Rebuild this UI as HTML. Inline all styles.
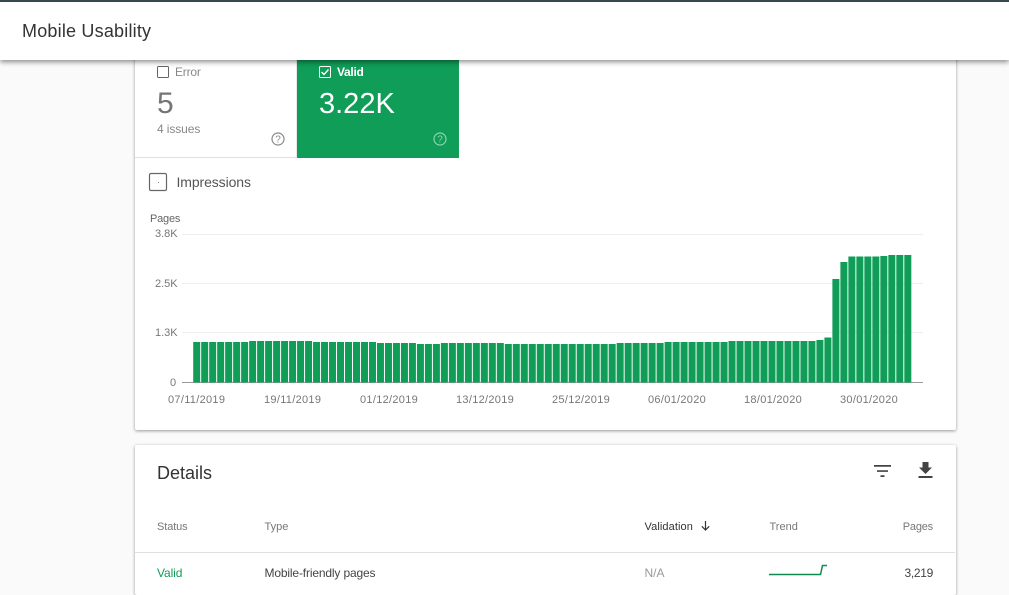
<!DOCTYPE html>
<html>
<head>
<meta charset="utf-8">
<style>
html,body{margin:0;padding:0;width:1009px;height:595px;overflow:hidden;background:#fafafa;font-family:"Liberation Sans",sans-serif;}
#page{position:relative;width:1009px;height:595px;overflow:hidden;background:#fafafa;}
.t{position:absolute;white-space:nowrap;line-height:1;}
.d{top:395px;font-size:11px;color:#777;letter-spacing:.3px;}
.y{font-size:11px;color:#777;}
#hdr{position:absolute;left:0;top:0;width:1009px;height:58px;background:#fff;border-top:2px solid #37474f;box-shadow:0 2px 5px rgba(0,0,0,.45);z-index:5;}
.card{position:absolute;left:135px;width:821px;background:#fff;box-shadow:0 1px 3px rgba(0,0,0,.4);border-radius:2px;}
svg{position:absolute;left:0;top:0;}
</style>
</head>
<body>
<div id="page">
<div class="card" style="top:40px;height:390px;"></div>
<div class="card" style="top:445px;height:150px;"></div>
<div style="position:absolute;left:135px;top:157px;width:162px;height:1px;background:#e0e0e0;"></div>
<div style="position:absolute;left:296px;top:60px;width:1px;height:98px;background:#e8e8e8;"></div>
<div style="position:absolute;left:297px;top:60px;width:162px;height:98px;background:#0f9d58;"></div>
<div id="hdr"></div>
<div class="t" style="left:22px;top:22px;font-size:18px;color:#333;letter-spacing:.2px;z-index:6;">Mobile Usability</div>

<div class="t" style="left:175px;top:66px;font-size:12px;color:#888;letter-spacing:-.2px;">Error</div>
<div class="t" style="left:157px;top:89px;font-size:30px;color:#757575;">5</div>
<div class="t" style="left:157px;top:123px;font-size:12px;color:#888;letter-spacing:-.1px;">4 issues</div>
<div class="t" style="left:337px;top:66px;font-size:12px;font-weight:bold;color:#fff;letter-spacing:-.3px;">Valid</div>
<div class="t" style="left:319px;top:90px;font-size:29px;color:#fff;">3.22K</div>
<div class="t" style="left:176.500px;top:175px;font-size:14px;color:#555;letter-spacing:-.1px;">Impressions</div>
<div class="t" style="left:150px;top:214px;font-size:11px;color:#666;letter-spacing:-.2px;">Pages</div>
<div class="t y" style="left:155px;top:229px;">3.8K</div>
<div class="t y" style="left:155px;top:279px;">2.5K</div>
<div class="t y" style="left:155px;top:328px;">1.3K</div>
<div class="t y" style="left:170px;top:378px;">0</div>
<div class="t d" style="left:168px;">07/11/2019</div>
<div class="t d" style="left:264px;">19/11/2019</div>
<div class="t d" style="left:360px;">01/12/2019</div>
<div class="t d" style="left:456px;">13/12/2019</div>
<div class="t d" style="left:552px;">25/12/2019</div>
<div class="t d" style="left:648px;">06/01/2020</div>
<div class="t d" style="left:744px;">18/01/2020</div>
<div class="t d" style="left:840px;">30/01/2020</div>

<div class="t" style="left:157px;top:464px;font-size:18px;color:#333;">Details</div>
<div class="t" style="left:157px;top:522px;font-size:11px;color:#777;letter-spacing:-.1px;">Status</div>
<div class="t" style="left:264.500px;top:522px;font-size:11px;color:#777;">Type</div>
<div class="t" style="left:644.500px;top:522px;font-size:11px;color:#333;letter-spacing:.1px;">Validation</div>
<div class="t" style="left:769.500px;top:522px;font-size:11px;color:#777;">Trend</div>
<div class="t" style="right:76px;top:522px;font-size:11px;color:#777;letter-spacing:-.2px;">Pages</div>
<div class="t" style="left:157px;top:567px;font-size:12px;color:#0f9d58;letter-spacing:-.1px;">Valid</div>
<div class="t" style="left:264.500px;top:567px;font-size:12px;color:#444;letter-spacing:-.15px;">Mobile-friendly pages</div>
<div class="t" style="left:644.500px;top:567px;font-size:12px;color:#999;">N/A</div>
<div class="t" style="right:76px;top:567px;font-size:12px;color:#444;letter-spacing:-.3px;">3,219</div>

<svg width="1009" height="595" viewBox="0 0 1009 595" style="z-index:2;">
  <!-- checkboxes -->
  <rect x="157.500" y="66.500" width="11" height="11" rx="1" fill="none" stroke="#666" stroke-width="1"/>
  <rect x="319.500" y="66.500" width="11" height="11" rx="1" fill="none" stroke="#fff" stroke-width="1"/>
  <path d="M321.500 72l2.500 2.500 4.500-5" fill="none" stroke="#fff" stroke-width="1.400"/>
  <rect x="149.500" y="173.500" width="17" height="17" rx="1.500" fill="none" stroke="#666" stroke-width="1.200"/>
  <rect x="158" y="182" width="1" height="1" fill="#888"/>
  <!-- help icons -->
  <circle cx="278" cy="139" r="6" fill="none" stroke="#888" stroke-width="1.200"/>
  <text x="278" y="142.500" font-size="10" text-anchor="middle" fill="#888" font-family="Liberation Sans">?</text>
  <circle cx="440" cy="139" r="6" fill="none" stroke="#8fd3b0" stroke-width="1.200"/>
  <text x="440" y="142.500" font-size="10" text-anchor="middle" fill="#8fd3b0" font-family="Liberation Sans">?</text>
  <!-- grid -->
  <path d="M182 234.500H923M182 283.500H923M182 332.500H923" stroke="#eeeeee" stroke-width="1" fill="none"/>
  <path d="M182 382.500H923" stroke="#999" stroke-width="1" fill="none"/>
  <!-- bars -->
  <path fill="#0f9d58" d="M193.200 382.500V342h7V382.500z
  m7.990 0V342h7V382.500z m7.990 0V342h7V382.500z m7.990 0V342h7V382.500z m7.990 0V342h7V382.500z m7.990 0V342h7V382.500z m7.990 0V342h7V382.500z
  m7.990 0V341h7V382.500z m7.990 0V341h7V382.500z m7.990 0V341h7V382.500z m7.990 0V341h7V382.500z m7.990 0V341h7V382.500z m7.990 0V341h7V382.500z m7.990 0V341h7V382.500z m7.990 0V341h7V382.500z
  m7.990 0V342h7V382.500z m7.990 0V342h7V382.500z m7.990 0V342h7V382.500z m7.990 0V342h7V382.500z m7.990 0V342h7V382.500z m7.990 0V342h7V382.500z m7.990 0V342h7V382.500z m7.990 0V342h7V382.500z
  m7.990 0V343h7V382.500z m7.990 0V343h7V382.500z m7.990 0V343h7V382.500z m7.990 0V343h7V382.500z m7.990 0V343h7V382.500z
  m7.990 0V344h7V382.500z m7.990 0V344h7V382.500z m7.990 0V344h7V382.500z
  m7.990 0V343h7V382.500z m7.990 0V343h7V382.500z m7.990 0V343h7V382.500z m7.990 0V343h7V382.500z m7.990 0V343h7V382.500z m7.990 0V343h7V382.500z m7.990 0V343h7V382.500z m7.990 0V343h7V382.500z
  m7.990 0V344h7V382.500z m7.990 0V344h7V382.500z m7.990 0V344h7V382.500z m7.990 0V344h7V382.500z m7.990 0V344h7V382.500z m7.990 0V344h7V382.500z m7.990 0V344h7V382.500z m7.990 0V344h7V382.500z m7.990 0V344h7V382.500z m7.990 0V344h7V382.500z m7.990 0V344h7V382.500z m7.990 0V344h7V382.500z m7.990 0V344h7V382.500z m7.990 0V344h7V382.500z
  m7.990 0V343h7V382.500z m7.990 0V343h7V382.500z m7.990 0V343h7V382.500z m7.990 0V343h7V382.500z m7.990 0V343h7V382.500z m7.990 0V343h7V382.500z
  m7.990 0V342h7V382.500z m7.990 0V342h7V382.500z m7.990 0V342h7V382.500z m7.990 0V342h7V382.500z m7.990 0V342h7V382.500z m7.990 0V342h7V382.500z m7.990 0V342h7V382.500z m7.990 0V342h7V382.500z
  m7.990 0V341h7V382.500z m7.990 0V341h7V382.500z m7.990 0V341h7V382.500z m7.990 0V341h7V382.500z m7.990 0V341h7V382.500z m7.990 0V341h7V382.500z m7.990 0V341h7V382.500z m7.990 0V341h7V382.500z m7.990 0V341h7V382.500z m7.990 0V341h7V382.500z m7.990 0V341h7V382.500z
  m7.990 0V340h7V382.500z
  m7.990 0V337.500h7V382.500z
  m7.990 0V279h7V382.500z
  m7.990 0V262h7V382.500z
  m7.990 0V256.500h7V382.500z m7.990 0V256.500h7V382.500z m7.990 0V256.500h7V382.500z m7.990 0V256.500h7V382.500z
  m7.990 0V256h7V382.500z
  m7.990 0V255h7V382.500z m7.990 0V255h7V382.500z m7.990 0V255h7V382.500z"/>
  <!-- details icons -->
  <path d="M874 465h17v1.700h-17zM877 470.200h11v1.700h-11zM880.500 475.300h4v1.700h-4z" fill="#444"/>
  <path d="M922.500 462h6v5.500h3.500l-6.500 6.500-6.500-6.500h3.500zM918.500 476h14v2h-14z" fill="#444"/>
  <!-- sort arrow -->
  <path d="M705.500 521v9M701.800 526.300l3.700 3.700 3.700-3.700" fill="none" stroke="#333" stroke-width="1.200"/>
  <!-- table divider -->
  <path d="M135 552.500H955" stroke="#e0e0e0" stroke-width="1" fill="none"/>
  <!-- sparkline -->
  <path d="M769 574.500H820.500L822.500 565.500H827" fill="none" stroke="#0f8a50" stroke-width="1.500"/>
</svg>
</div>
</body>
</html>
